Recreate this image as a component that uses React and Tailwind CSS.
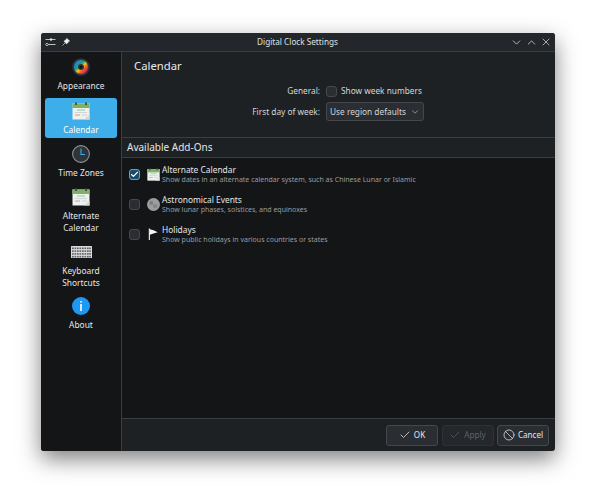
import React from 'react'
import { Check, Ban, ChevronDown, ChevronUp, X } from 'lucide-react'

function CalendarIcon({ size = 18 }) {
  return (
    <svg width={size} height={size} viewBox="0 0 18 18">
      <rect x="0.5" y="1.5" width="17" height="16" fill="#eef1ee" />
      <rect x="0.5" y="1.5" width="17" height="4.5" fill="#7fb069" />
      <rect x="3" y="0.5" width="2" height="2.5" fill="#3e5a35" />
      <rect x="13" y="0.5" width="2" height="2.5" fill="#3e5a35" />
      <rect x="5" y="7.5" width="8" height="1" fill="#8fca9a" />
      <rect x="3" y="10" width="12" height="1" fill="#cfd6d2" />
      <rect x="3" y="12.5" width="5" height="1" fill="#d99a9a" />
      <rect x="10" y="12.5" width="5" height="1" fill="#cfd6d2" />
      <path d="M12 17.5 L17.5 12.5 V17.5 Z" fill="#d5dad6" />
    </svg>
  )
}

function AppearanceIcon() {
  return (
    <svg width="18" height="18" viewBox="0 0 18 18">
      <defs>
        <linearGradient id="wheel" x1="0" y1="0" x2="1" y2="1">
          <stop offset="0" stopColor="#2f7fe0" />
          <stop offset="0.35" stopColor="#16a37f" />
          <stop offset="0.55" stopColor="#f2c11d" />
          <stop offset="0.75" stopColor="#ee5a1f" />
          <stop offset="1" stopColor="#d01f8f" />
        </linearGradient>
      </defs>
      <circle cx="9" cy="9" r="8.8" fill="#31363b" />
      <circle cx="9" cy="9" r="5" fill="none" stroke="url(#wheel)" strokeWidth="4" />
      <circle cx="9" cy="9" r="1.5" fill="#111" />
    </svg>
  )
}

function ClockIcon() {
  return (
    <svg width="18" height="18" viewBox="0 0 18 18">
      <circle cx="9" cy="9" r="8.4" fill="#2f343a" stroke="#8b9197" strokeWidth="1.1" />
      <path d="M9 3.5 V9.5 H13" fill="none" stroke="#3daee9" strokeWidth="1.1" />
    </svg>
  )
}

function KeyboardIcon() {
  return (
    <svg width="21" height="12" viewBox="0 0 21 12">
      <rect width="21" height="12" rx="0.5" fill="#d8dadb" />
      {[1.5, 4.3, 7.1, 9.9].map((y) =>
        [1, 3.5, 6, 8.5, 11, 13.5, 16, 18.2].map((x) => <rect key={`${x}-${y}`} x={x} y={y} width="1.7" height="1.6" fill="#5d6165" />)
      )}
    </svg>
  )
}

function AboutIcon() {
  return (
    <svg width="18" height="18" viewBox="0 0 18 18">
      <circle cx="9" cy="9" r="9" fill="#1d99f3" />
      <rect x="8.2" y="4" width="1.6" height="1.6" fill="#fff" />
      <rect x="8.2" y="7" width="1.6" height="7" fill="#fff" />
    </svg>
  )
}

function MoonIcon() {
  return (
    <svg width="13" height="13" viewBox="0 0 12 12">
      <circle cx="6" cy="6" r="6" fill="#9b9d9e" />
      <circle cx="4" cy="4.5" r="1.8" fill="#7b7d7e" />
      <circle cx="7.5" cy="7.5" r="2" fill="#858788" />
    </svg>
  )
}

function FlagIcon() {
  return (
    <svg width="11" height="12" viewBox="0 0 12 14">
      <path d="M0.5 0.5 H1.8 V14 H0.5 Z" fill="#f4f4f4" />
      <path d="M1.8 1.5 L6 2.5 L11 5 L6 6.5 L1.8 8 Z" fill="#f4f4f4" />
    </svg>
  )
}

function Checkbox({ checked }) {
  return checked ? (
    <div className="flex h-[11px] w-[11px] items-center justify-center rounded-[3px] border border-[#3daee9] bg-[#1d4a64]">
      <Check size={9} strokeWidth={3} className="text-white" />
    </div>
  ) : (
    <div className="h-[11px] w-[11px] rounded-[3px] border border-[#45494e] bg-[#2a2e32]" />
  )
}

function SideItem({ icon, label, active, className }) {
  return (
    <div className={`flex flex-col items-center rounded-[3px] ${active ? 'bg-[#3daee9] text-white' : 'text-[#e4e6e7]'} ${className}`}>
      <div className="flex h-[18px] items-center">{icon}</div>
      <div className="mt-[4px] text-center text-[8.4px] leading-[11.5px]">{label}</div>
    </div>
  )
}

function AddOn({ checked, icon, title, desc }) {
  return (
    <div className="flex h-[30px] items-center">
      <div className="flex w-[24px] justify-center">
        <Checkbox checked={checked} />
      </div>
      <div className="flex w-[15px] justify-center">{icon}</div>
      <div className="ml-[1px] flex flex-col">
        <div className="text-[8.4px] leading-[11px] text-[#e4e6e7]">{title}</div>
        <div className="text-[7px] leading-[10px] text-[#9a9d9f]">{desc}</div>
      </div>
    </div>
  )
}

function FooterButton({ icon, label, disabled }) {
  return (
    <div className={`flex h-[21px] w-[52px] items-center justify-center gap-[3px] rounded-[3px] border text-[8.1px] ${disabled ? 'border-[#2e3236] bg-[#24272b] text-[#5f6367]' : 'border-[#44484d] bg-[#2a2e32] text-[#e4e6e7]'}`}>
      {icon}
      {label}
    </div>
  )
}

export default function App() {
  return (
    <div className="h-[500px] w-[596px] overflow-hidden bg-white pl-[41px] pt-[33px] font-['Noto_Sans',sans-serif]">
      <div className="flex h-[418px] w-[514px] flex-col overflow-hidden rounded-[3px] bg-[#1e2124] shadow-[0_8px_22px_rgba(0,0,0,0.5)]">
        {/* titlebar */}
        <div className="flex h-[19px] shrink-0 items-center border-b border-[#3a3e42] bg-[#23262a] pl-[4px] pr-[3px]">
          <svg width="11" height="10" viewBox="0 0 11 10" className="text-[#e4e6e7]">
            <path d="M0.5 2.5 H10.5 M0.5 7.5 H10.5" stroke="currentColor" strokeWidth="0.8" />
            <circle cx="6" cy="2.5" r="1.2" fill="currentColor" />
            <circle cx="2" cy="7.5" r="1.2" fill="#23262a" stroke="currentColor" strokeWidth="0.7" />
          </svg>
          <svg width="8" height="8" viewBox="0 0 9 9" className="ml-[6px]">
            <path d="M5.5 0.5 L8.5 3.5 L7.5 4 L5.5 6.5 L5 6.5 L2.5 4 L2.5 3.5 L5 1.5 Z M3.5 5.5 L0.5 8.5" fill="#f0f0f0" stroke="#f0f0f0" strokeWidth="0.7" />
          </svg>
          <div className="flex-1 pl-[15px] text-center text-[8.2px] text-[#dfe1e2]">Digital Clock Settings</div>
          <div className="flex items-center gap-[2px] text-[#dfe1e2]">
            <ChevronDown size={13} strokeWidth={1.4} />
            <ChevronUp size={13} strokeWidth={1.4} />
            <X size={12} strokeWidth={1.4} />
          </div>
        </div>

        <div className="flex min-h-0 flex-1">
          {/* sidebar */}
          <div className="flex w-[81px] shrink-0 flex-col border-r border-[#3a3e42] bg-[#141517] px-[4px] pt-[6px]">
            <SideItem icon={<AppearanceIcon />} label="Appearance" className="h-[34px]" />
            <SideItem icon={<CalendarIcon />} label="Calendar" active className="mt-[6px] h-[40px] pt-[4px] shadow-[0_0_0_1px_#16191c]" />
            <SideItem icon={<ClockIcon />} label="Time Zones" className="mt-[7px] h-[34px]" />
            <SideItem icon={<CalendarIcon />} label={<>Alternate<br />Calendar</>} className="mt-[9px] h-[46px]" />
            <SideItem icon={<KeyboardIcon />} label={<>Keyboard<br />Shortcuts</>} className="mt-[9px] h-[46px]" />
            <SideItem icon={<AboutIcon />} label="About" className="mt-[8px]" />
          </div>

          {/* content */}
          <div className="flex min-w-0 flex-1 flex-col">
            <div className="h-[86px] shrink-0 border-b border-[#3a3e42] pl-[12px] pt-[5px]">
              <div className="text-[11.3px] leading-[17px] text-[#e8eaeb]">Calendar</div>
              <div className="ml-[-12px] mt-[11px] grid grid-cols-[198px_auto] items-center gap-x-[6px] gap-y-[5px] text-[8.3px] text-[#d4d6d7]">
                <div className="text-right">General:</div>
                <div className="flex items-center gap-[4px]">
                  <Checkbox />
                  <span>Show week numbers</span>
                </div>
                <div className="text-right">First day of week:</div>
                <div className="flex h-[19px] w-[98px] items-center justify-between rounded-[3px] border border-[#44484d] bg-[#2a2e32] pl-[3px] pr-[3px]">
                  <span className="whitespace-nowrap">Use region defaults</span>
                  <ChevronDown size={10} strokeWidth={1.4} />
                </div>
              </div>
            </div>
            <div className="flex h-[20px] shrink-0 items-center border-b border-[#3a3e42] pl-[5px] text-[10px] text-[#e4e6e7]">Available Add-Ons</div>
            <div className="flex min-h-0 flex-1 flex-col bg-[#141517] pt-[1px]">
              <AddOn checked icon={<CalendarIcon size={13} />} title="Alternate Calendar" desc="Show dates in an alternate calendar system, such as Chinese Lunar or Islamic" />
              <AddOn icon={<MoonIcon />} title="Astronomical Events" desc="Show lunar phases, solstices, and equinoxes" />
              <AddOn icon={<FlagIcon />} title="Holidays" desc="Show public holidays in various countries or states" />
            </div>
            <div className="flex h-[33px] shrink-0 items-center justify-end gap-[3.5px] border-t border-[#3a3e42] pr-[6px]">
              <FooterButton icon={<Check size={12} strokeWidth={1.5} />} label="OK" />
              <FooterButton disabled icon={<Check size={12} strokeWidth={1.5} />} label="Apply" />
              <FooterButton icon={<Ban size={12} strokeWidth={1.5} />} label="Cancel" />
            </div>
          </div>
        </div>
      </div>
    </div>
  )
}
